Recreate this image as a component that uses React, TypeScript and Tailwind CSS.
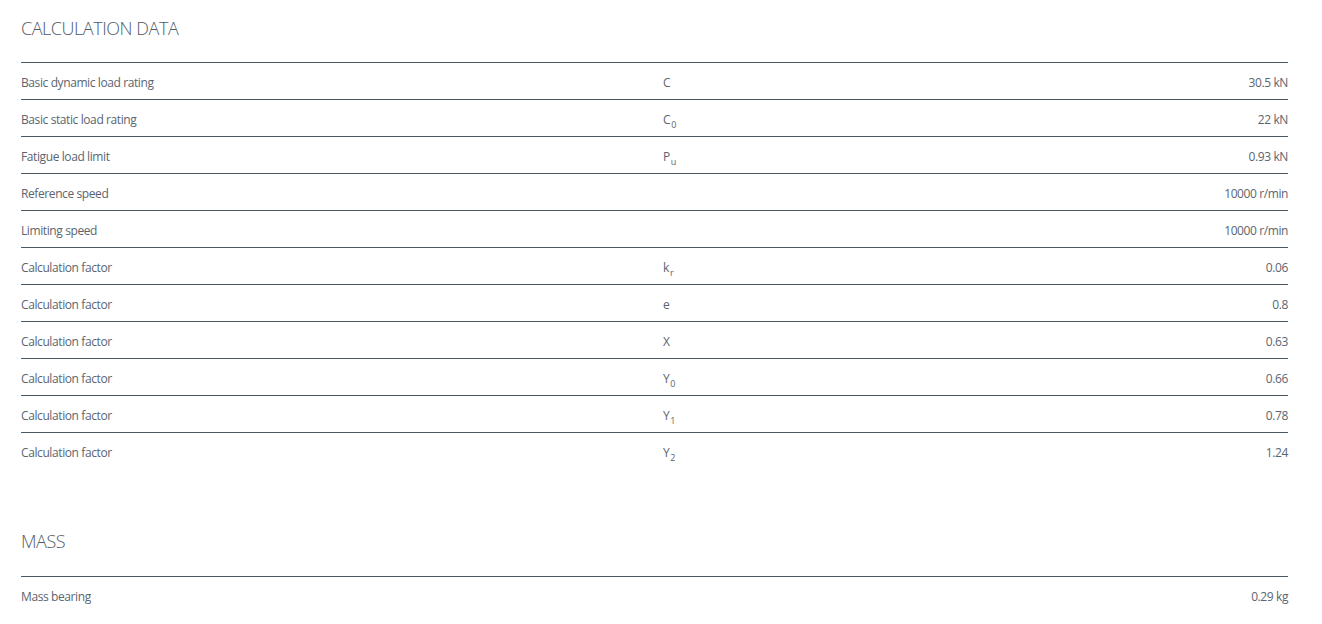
import React from "react";

type Row = { label: string; sym?: string; sub?: string; value: string };

const calc: Row[] = [
  { label: "Basic dynamic load rating", sym: "C", value: "30.5 kN" },
  { label: "Basic static load rating", sym: "C", sub: "0", value: "22 kN" },
  { label: "Fatigue load limit", sym: "P", sub: "u", value: "0.93 kN" },
  { label: "Reference speed", value: "10000 r/min" },
  { label: "Limiting speed", value: "10000 r/min" },
  { label: "Calculation factor", sym: "k", sub: "r", value: "0.06" },
  { label: "Calculation factor", sym: "e", value: "0.8" },
  { label: "Calculation factor", sym: "X", value: "0.63" },
  { label: "Calculation factor", sym: "Y", sub: "0", value: "0.66" },
  { label: "Calculation factor", sym: "Y", sub: "1", value: "0.78" },
  { label: "Calculation factor", sym: "Y", sub: "2", value: "1.24" },
];

function Table({ rows }: { rows: Row[] }) {
  return (
    <div className="flex flex-col">
      {rows.map((r, i) => (
        <div
          key={i}
          className="flex items-center h-[37px] border-t border-[#4a5864] text-[12px] tracking-[-0.4px] text-[#5a6570]"
        >
          <div className="w-[642px] pt-[4px]">{r.label}</div>
          <div className="flex-1 pt-[4px]">
            {r.sym}
            {r.sub && (
              <span className="text-[9px] relative top-[4px] ml-[1px]">{r.sub}</span>
            )}
          </div>
          <div className="pt-[4px]">{r.value}</div>
        </div>
      ))}
    </div>
  );
}

export default function App() {
  return (
    <div
      className="bg-white w-[1322px] h-[624px] overflow-hidden"
      style={{ fontFamily: '"Open Sans", "Liberation Sans", sans-serif' }}
    >
      <div className="ml-[21px] w-[1267px]">
        <h2 className="pt-[16px] h-[62px] text-[18px] leading-[24px] font-light text-[#4f5b66] tracking-[-0.45px]">
          CALCULATION DATA
        </h2>
        <Table rows={calc} />
        <h2 className="pt-[60px] h-[107px] text-[18px] leading-[24px] font-light text-[#4f5b66] tracking-[-0.45px]">
          MASS
        </h2>
        <Table rows={[{ label: "Mass bearing", value: "0.29 kg" }]} />
      </div>
    </div>
  );
}
